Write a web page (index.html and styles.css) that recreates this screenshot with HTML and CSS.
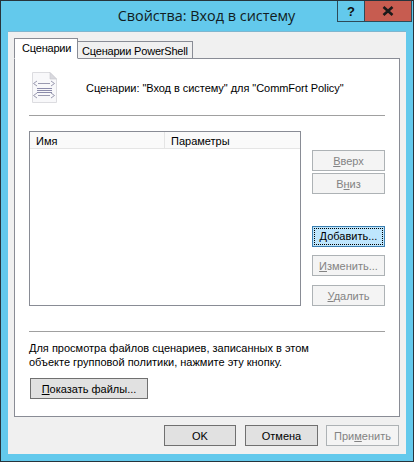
FILE: index.html
```html
<!DOCTYPE html>
<html lang="ru">
<head>
<meta charset="UTF-8" />
<title>Свойства: Вход в систему</title>
<link rel="stylesheet" href="styles.css">
</head>
<body>
<div class="window">
  <div class="titlebar">
    <span class="title">Свойства: Вход в систему</span>
    <div class="controls">
      <div class="ctl help">?</div>
      <div class="ctl close">
        <svg width="12" height="10" viewBox="0 0 12 10"><path d="M1.5 1 L10.5 9 M10.5 1 L1.5 9" stroke="#1a1a1a" stroke-width="2.6" fill="none"/></svg>
      </div>
    </div>
  </div>

  <div class="client">
    <div class="tabs">
      <div class="tab active">Сценарии</div>
      <div class="tab">Сценарии PowerShell</div>
    </div>

    <div class="panel">
      <div class="head">
        <svg class="doc" width="25" height="31" viewBox="0 0 25 31">
          <path d="M0.5 0.5 H18 L24.5 7 V30.500 H0.5 Z" fill="#f8f8fa" stroke="#dcdce0"/>
          <path d="M18 0.5 V7 H24.5 Z" fill="#d9d9de" stroke="#c8c8ce" stroke-width="0.6"/>
          <path d="M5 9 L1.500 11.500 L5 14 M6 11.500 H18 M19 9 L22.500 11.500 L19 14" fill="none" stroke="#9a9ab0"/>
          <path d="M5 16.500 H20 M5 18.500 H20 M5 20.500 H20" fill="none" stroke="#8c8cab"/>
          <path d="M5 21 L1.500 23.500 L5 26 M6 23.500 H18 M19 21 L22.500 23.500 L19 26" fill="none" stroke="#9a9ab0"/>
        </svg>
        <span class="head-text">Сценарии: "Вход в систему" для "CommFort Policy"</span>
      </div>
      <div class="sep"></div>

      <div class="middle">
        <div class="list">
          <div class="list-head">
            <div class="col col-name">Имя</div>
            <div class="col col-params">Параметры</div>
          </div>
        </div>
        <div class="side">
          <button class="btn off up"><u>В</u>верх</button>
          <button class="btn off down">В<u>н</u>из</button>
          <button class="btn focus add"><span class="dots"><u>Д</u>обавить...</span></button>
          <button class="btn off edit"><u>И</u>зменить...</button>
          <button class="btn off del"><u>У</u>далить</button>
        </div>
      </div>

      <div class="sep"></div>
      <p class="note">Для просмотра файлов сценариев, записанных в этом<br>объекте групповой политики, нажмите эту кнопку.</p>
      <button class="btn show"><u>П</u>оказать файлы...</button>
    </div>

    <div class="footer">
      <button class="btn dlg ok">OK</button>
      <button class="btn dlg">Отмена</button>
      <button class="btn dlg off apply">При<u>м</u>енить</button>
    </div>
  </div>
</div>
</body>
</html>
```

FILE: styles.css
```css
* { margin: 0; padding: 0; box-sizing: border-box; }
body { width: 414px; height: 462px; overflow: hidden; background: #63c9ec; font-family: "Liberation Sans", Arial, sans-serif; font-size: 11px; color: #000; }

.window {
  width: 414px;
  height: 462px;
  display: flex;
  flex-direction: column;
  background: #63c9ec;
  border: 1px solid #27343c;
  padding: 0 7px 7px;
}

.titlebar {
  height: 30px;
  flex: none;
  display: flex;
  justify-content: center;
  position: relative;
}
.title { font-family: "Open Sans", sans-serif; font-size: 14.4px; line-height: 29px; color: #111c22; padding-right: 1px; }
.controls { position: absolute; top: 0; right: -6px; display: flex; height: 21px; border: 1px solid #2d4a58; border-top: none; }
.ctl { display: flex; align-items: center; justify-content: center; }
.help { width: 27px; border-right: 1px solid #2d4a58; font-weight: bold; font-size: 13px; color: #111; }
.close { width: 46px; background: #c75c50; }

.client {
  flex: 1;
  display: flex;
  flex-direction: column;
  background: #f0f0f0;
  border-top: 1px solid #7fb6cf;
  padding: 7px 6px 0;
}

.tabs { display: flex; height: 20px; align-items: flex-end; position: relative; z-index: 1; margin-bottom: -1px; letter-spacing: -0.2px; }
.tab {
  width: 115px;
  height: 18px;
  padding: 0 4px;
  line-height: 18px;
  white-space: nowrap;
  background: #f0f0f0;
  border: 1px solid #898c95;
  border-left: none;
  border-bottom: 1px solid #898c95;
}
.tab.active {
  height: 21px;
  width: 64px;
  padding: 0 0 0 7px;
  line-height: 18px;
  background: #fff;
  border-left: 1px solid #898c95;
  border-bottom: 1px solid #fff;
}

.panel {
  height: 359px;
  flex: none;
  background: #fff;
  border: 1px solid #898c95;
  padding: 0 14px;
}

.head { height: 56px; display: flex; align-items: center; }
.doc { margin: 1px 0 0 3px; }
.head-text { margin: 1px 0 0 29px; letter-spacing: -0.05px; }
.sep { height: 1px; background: #a0a0a0; }

.middle { display: flex; gap: 11px; padding-top: 15px; height: 215px; }
.list { width: 272px; height: 175px; border: 1px solid #898c95; }
.list-head { display: flex; height: 17px; background: #fafafa; border-bottom: 1px solid #e5e5e5; line-height: 18px; }
.col { padding-left: 6px; }
.col-name { width: 135px; border-right: 1px solid #e5e5e5; }

.side { width: 73px; display: flex; flex-direction: column; padding-top: 19px; }
.btn {
  display: block;
  width: 73px;
  height: 21px;
  font: inherit;
  color: #000;
  background: #e1e1e1;
  border: 1px solid #707070;
  text-align: center;
}
.btn.off { background: #f4f4f4; border-color: #adb2b5; color: #838383; }
.btn.focus { background: #bee6fd; border-color: #3c7fb1; padding: 1px; }
.dots { display: block; height: 17px; line-height: 14px; border: 1px dotted #000; }
.down { margin-top: 2px; }
.add { margin-top: 32px; }
.edit { margin-top: 8px; }
.del { margin-top: 9px; }

.note { margin-top: 9px; line-height: 14px; }
.show { width: 118px; margin: 9px 0 0 1px; text-align: center; }

.footer { flex: 1; display: flex; justify-content: flex-end; gap: 9px; padding: 8px 1px 0 0; }
.dlg { width: 73px; }
.ok { width: 72px; }
.apply { margin-left: -1px; }
```
